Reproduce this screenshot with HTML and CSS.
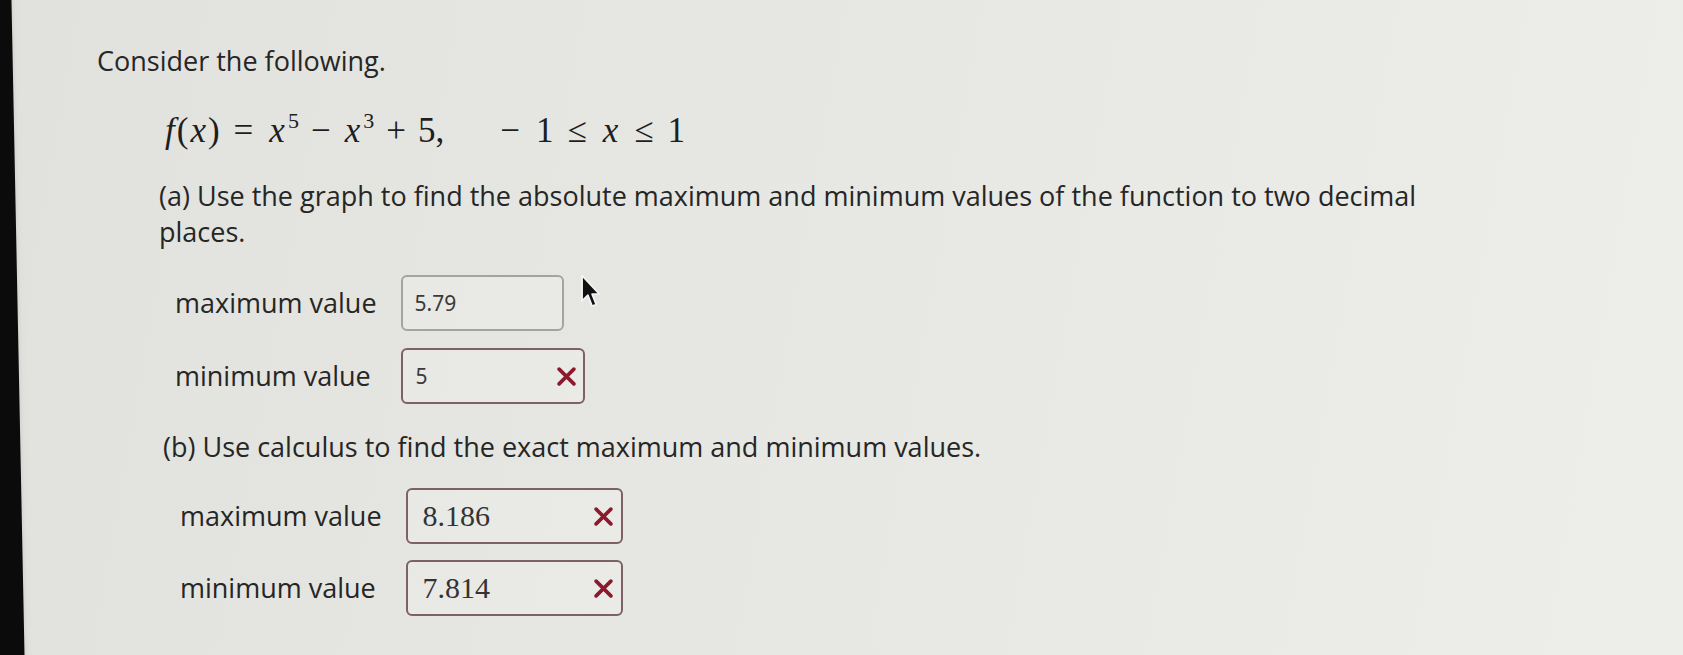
FILE: index.html
```html
<!DOCTYPE html>
<html lang="en">
<head>
<meta charset="utf-8">
<title>Consider the following</title>
<link rel="stylesheet" href="styles.css">
</head>
<body>
<main class="page">
  <p class="intro">Consider the following.</p>
  <div class="formula">
    <span class="mi">f</span><span>(</span><span class="mi">x</span><span>)</span><span class="rel">=</span><span class="mi">x</span><sup>5</sup><span class="bin">−</span><span class="mi">x</span><sup>3</sup><span class="bin">+</span><span>5,</span><span class="bin unary">−</span><span>1</span><span class="rel">≤</span><span class="mi">x</span><span class="rel">≤</span><span>1</span>
  </div>
  <p class="part part-a">(a) Use the graph to find the absolute maximum and minimum values of the function to two decimal places.</p>
  <div class="answers answers-a">
    <span class="lbl">maximum value</span>
    <div class="box box-plain box-a1"><span class="val val-sans">5.79</span></div>
    <span class="lbl">minimum value</span>
    <div class="box box-wrong box-a2"><span class="val val-sans">5</span>
      <svg class="xmark" viewBox="0 0 18 18" aria-hidden="true"><path d="M2 2 L16 16 M16 2 L2 16"/></svg>
    </div>
  </div>
  <p class="part part-b">(b) Use calculus to find the exact maximum and minimum values.</p>
  <div class="answers answers-b">
    <span class="lbl">maximum value</span>
    <div class="box box-wrong box-b"><span class="val val-serif">8.186</span>
      <svg class="xmark" viewBox="0 0 18 18" aria-hidden="true"><path d="M2 2 L16 16 M16 2 L2 16"/></svg>
    </div>
    <span class="lbl">minimum value</span>
    <div class="box box-wrong box-b"><span class="val val-serif">7.814</span>
      <svg class="xmark" viewBox="0 0 18 18" aria-hidden="true"><path d="M2 2 L16 16 M16 2 L2 16"/></svg>
    </div>
  </div>
  <svg class="cursor" viewBox="0 0 20 34" aria-hidden="true">
    <path d="M2 1 L2 25 L7.5 19.5 L11.5 30 L15.5 28.5 L11.5 18.5 L18.5 18.5 Z" fill="#111" stroke="#f4f4f2" stroke-width="1.6" stroke-linejoin="round"/>
  </svg>
</main>
</body>
</html>
```

FILE: styles.css
```css
html, body {
  margin: 0;
  padding: 0;
}
body {
  width: 1683px;
  height: 655px;
  overflow: hidden;
  background:
    linear-gradient(88.86deg, #0b0b0b 0, #0b0b0b 24px, #d6d6d2 25px, #dfdfdb 28px, rgba(0,0,0,0) 34px),
    linear-gradient(100deg, #e1e1dd 0%, #e6e6e2 40%, #eaeae7 75%, #ededea 100%);
  font-family: "Open Sans", "Noto Sans", sans-serif;
  color: #262626;
}
.page {
  position: relative;
  padding: 43px 0 0 97px;
  height: 100%;
  box-sizing: border-box;
}
.intro {
  margin: 0;
  font-size: 27px;
  line-height: 36px;
}
.formula {
  display: flex;
  align-items: baseline;
  margin: 31px 0 0 66px;
  font-family: "Liberation Serif", "DejaVu Serif", serif;
  font-size: 35px;
  line-height: 42px;
  height: 42px;
  white-space: nowrap;
  color: #1e1e1e;
}
.formula .mi {
  font-style: italic;
  padding: 0 2px;
}
.formula sup {
  font-size: 22px;
  line-height: 0;
  position: relative;
  top: -14px;
  margin-left: 1px;
}
.formula .rel {
  margin: 0 14px;
}
.formula .bin {
  margin: 0 12px;
}
.formula .unary {
  margin-left: 56px;
  margin-right: 16px;
}
.part {
  margin: 0;
  font-size: 27px;
  line-height: 36px;
}
.part-a {
  margin: 26px 0 0 62px;
  max-width: 1300px;
}
.part-b {
  margin: 25px 0 0 66px;
}
.answers {
  display: grid;
  grid-template-columns: auto auto;
  justify-content: start;
  align-items: center;
}
.answers-a {
  margin: 25px 0 0 78px;
  column-gap: 24px;
  row-gap: 17px;
}
.answers-b {
  margin: 23px 0 0 83px;
  column-gap: 24px;
  row-gap: 16px;
}
.lbl {
  font-size: 27px;
  line-height: 36px;
}
.box {
  justify-self: start;
  box-sizing: border-box;
  height: 56px;
  display: flex;
  align-items: center;
  justify-content: space-between;
  border-radius: 6px;
  background: rgba(240, 240, 237, 0.35);
}
.box-plain {
  border: 2px solid #a3a3a1;
}
.box-wrong {
  border: 2px solid #7d6164;
}
.box-a1 {
  width: 163px;
  padding: 0 12px;
}
.box-a2 {
  width: 184px;
  padding: 0 7px 0 13px;
}
.box-b {
  width: 217px;
  padding: 0 8px 0 15px;
}
.val-sans {
  font-family: "Noto Sans", "Open Sans", sans-serif;
  font-size: 21px;
  color: #3a3a3a;
}
.val-serif {
  font-family: "Liberation Serif", "DejaVu Serif", serif;
  font-size: 30px;
  color: #333;
}
.xmark {
  width: 19px;
  height: 19px;
  fill: none;
  stroke: #8a1a2c;
  stroke-width: 3.4;
  stroke-linecap: round;
}
.cursor {
  position: absolute;
  left: 580px;
  top: 274px;
  width: 21px;
  height: 37px;
}
```
